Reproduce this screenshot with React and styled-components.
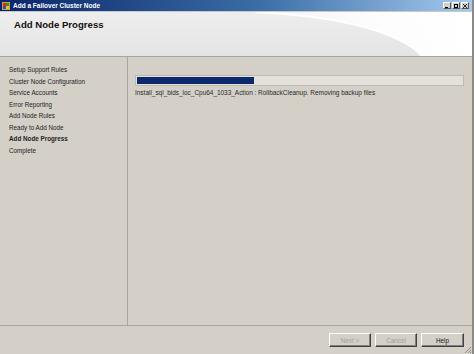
import React from 'react';
import styled, { createGlobalStyle } from 'styled-components';

const GlobalStyle = createGlobalStyle`
  html, body {
    margin: 0;
    padding: 0;
    background: #d4d0c8;
  }
  body {
    font-family: "Liberation Sans", Arial, sans-serif;
  }
`;

const Window = styled.div`
  width: 474px;
  height: 354px;
  display: flex;
  flex-direction: column;
  background: #d4d0c8;
  border-right: 2px solid #8c8a85;
  box-sizing: border-box;
  overflow: hidden;
`;

const TitleBar = styled.div`
  height: 11px;
  flex: none;
  display: flex;
  align-items: center;
  padding: 0 3px 0 2px;
  background: linear-gradient(90deg, #0a246a 0%, #3a6ea5 55%, #a6caf0 100%);
  border-bottom: 1px solid #c8c8c8;
`;

const TitleText = styled.span`
  flex: 1;
  color: #fff;
  font-size: 6.5px;
  font-weight: bold;
  margin-left: 3px;
`;

const WinButtons = styled.div`
  display: flex;
  gap: 1px;
`;

const WinButton = styled.div`
  width: 8px;
  height: 7px;
  background: #d4d0c8;
  border: 1px solid;
  border-color: #fff #555 #555 #fff;
  box-sizing: border-box;
  display: flex;
  align-items: center;
  justify-content: center;
`;

const Header = styled.div`
  position: relative;
  height: 44px;
  flex: none;
  background: linear-gradient(180deg, #eeeeee 0%, #e4e4e4 100%);
  border-bottom: 1px solid #a8a6a0;
  overflow: hidden;
`;

const Swoosh = styled.svg`
  position: absolute;
  top: 0;
  left: 0;
`;

const HeaderTitle = styled.h1`
  position: relative;
  margin: 0;
  padding: 7px 0 0 14px;
  font-size: 9.6px;
  font-weight: bold;
  color: #111;
`;

const Body = styled.div`
  flex: 1;
  display: flex;
  min-height: 0;
`;

const Nav = styled.ul`
  width: 128px;
  flex: none;
  margin: 0;
  padding: 7px 0 0 9px;
  box-sizing: border-box;
  list-style: none;
  border-right: 1px solid #a8a6a0;
`;

const NavItem = styled.li`
  font-size: 6.3px;
  line-height: 11.5px;
  color: #222;
  font-weight: ${(p) => (p.$active ? 'bold' : 'normal')};
`;

const Content = styled.div`
  flex: 1;
  padding: 18px 8px 0 7px;
`;

const Progress = styled.div`
  height: 11px;
  border: 1px solid #bcbab4;
  background: #e4e1db;
  box-sizing: border-box;
  padding: 1px;
`;

const Fill = styled.div`
  height: 100%;
  background: #0c2a6b;
`;

const Status = styled.div`
  margin-top: 3px;
  font-size: 6.45px;
  color: #2a2a2a;
  white-space: nowrap;
`;

const Footer = styled.div`
  position: relative;
  height: 29px;
  flex: none;
  border-top: 1px solid #a8a6a0;
  display: flex;
  justify-content: flex-end;
  align-items: flex-start;
  gap: 4px;
  padding: 7px 8px 0 0;
  box-sizing: border-box;
`;

const Button = styled.button`
  width: ${(p) => p.$w || 43}px;
  height: 14px;
  padding: 0;
  font-family: "Liberation Sans", Arial, sans-serif;
  font-size: 6.3px;
  background: #d4d0c8;
  color: ${(p) => (p.disabled ? '#a09e98' : '#111')};
  border: 1px solid;
  border-color: #fff #404040 #404040 #fff;
  box-shadow: inset -1px -1px 0 #808080;
`;

const Grip = styled.svg`
  position: absolute;
  right: 0;
  bottom: 0;
`;

const steps = [
  'Setup Support Rules',
  'Cluster Node Configuration',
  'Service Accounts',
  'Error Reporting',
  'Add Node Rules',
  'Ready to Add Node',
  'Add Node Progress',
  'Complete',
];

const App = () => (
  <>
    <GlobalStyle />
    <Window>
      <TitleBar>
        <svg width="8" height="8" viewBox="0 0 8 8">
          <rect x="0" y="0" width="8" height="8" fill="#c8a040" />
          <rect x="1" y="1" width="3" height="3" fill="#d03020" />
          <rect x="4" y="1" width="3" height="3" fill="#3a8a3a" />
          <rect x="1" y="4" width="3" height="3" fill="#2a5ab0" />
          <rect x="4" y="4" width="3" height="3" fill="#e8c040" />
        </svg>
        <TitleText>Add a Failover Cluster Node</TitleText>
        <WinButtons>
          <WinButton>
            <svg width="4" height="4"><rect x="0" y="3" width="3" height="1" fill="#000" /></svg>
          </WinButton>
          <WinButton>
            <svg width="4" height="4"><rect x="0.5" y="0.5" width="3" height="3" fill="none" stroke="#000" /></svg>
          </WinButton>
          <WinButton>
            <svg width="4" height="4"><path d="M0 0L4 4M4 0L0 4" stroke="#000" strokeWidth="0.8" /></svg>
          </WinButton>
        </WinButtons>
      </TitleBar>
      <Header>
        <Swoosh width="472" height="44" viewBox="0 0 472 44">
          <defs>
            <linearGradient id="g1" x1="0" y1="0" x2="1" y2="0">
              <stop offset="0" stopColor="#ffffff" stopOpacity="0.2" />
              <stop offset="0.5" stopColor="#ffffff" stopOpacity="0.85" />
              <stop offset="1" stopColor="#ffffff" stopOpacity="1" />
            </linearGradient>
          </defs>
          <path d="M255 0 C 340 4, 400 20, 422 44 L 472 44 L 472 0 Z" fill="url(#g1)" />
          <path d="M255 0 C 340 4, 400 20, 422 44" fill="none" stroke="#ffffff" strokeWidth="2" />
        </Swoosh>
        <HeaderTitle>Add Node Progress</HeaderTitle>
      </Header>
      <Body>
        <Nav>
          {steps.map((s) => (
            <NavItem key={s} $active={s === 'Add Node Progress'}>
              {s}
            </NavItem>
          ))}
        </Nav>
        <Content>
          <Progress>
            <Fill style={{ width: '36%' }} />
          </Progress>
          <Status>
            Install_sql_bids_loc_Cpu64_1033_Action : RollbackCleanup. Removing backup files
          </Status>
        </Content>
      </Body>
      <Footer>
        <Button disabled $w={42}>Next &gt;</Button>
        <Button disabled $w={42}>Cancel</Button>
        <Button $w={43}>Help</Button>
        <Grip width="8" height="8" viewBox="0 0 8 8">
          <path d="M7 1L1 7M7 4L4 7M7 6L6 7" stroke="#808080" strokeWidth="0.8" />
        </Grip>
      </Footer>
    </Window>
  </>
);

export default App;
